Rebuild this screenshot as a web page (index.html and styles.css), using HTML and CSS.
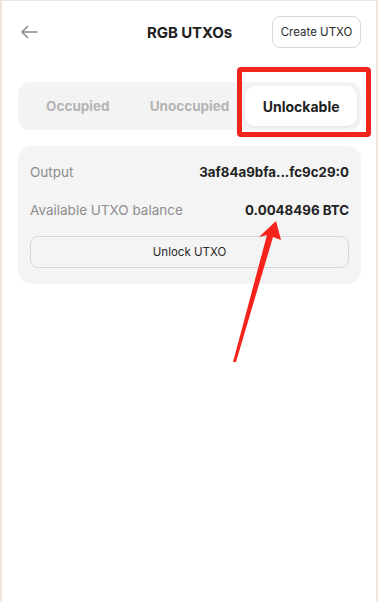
FILE: index.html
```html
<!DOCTYPE html>
<html>
<head>
<meta charset="utf-8">
<link rel="stylesheet" href="styles.css">
</head>
<body>
<div class="frame">
  <div class="edge-marks"><span></span><span></span></div>
  <header class="topbar">
    <button class="back" aria-label="Back">
      <svg width="18" height="14" viewBox="0 0 18 14"><path d="M17 7H2M7.5 1.5L2 7l5.5 5.5" fill="none" stroke="#8a8a8a" stroke-width="1.6" stroke-linecap="round" stroke-linejoin="round"/></svg>
    </button>
    <h1 class="title">RGB UTXOs</h1>
    <div class="right"><button class="create">Create UTXO</button></div>
  </header>

  <nav class="tabs">
    <div class="tab">Occupied</div>
    <div class="tab">Unoccupied</div>
    <div class="tab active">Unlockable</div>
  </nav>

  <section class="card">
    <div class="row"><span class="label">Output</span><span class="value">3af84a9bfa...fc9c29:0</span></div>
    <div class="row"><span class="label">Available UTXO balance</span><span class="value">0.0048496 BTC</span></div>
    <button class="unlock">Unlock UTXO</button>
  </section>

  <div class="highlight"></div>
  <svg class="arrow" width="378" height="601" viewBox="0 0 378 601">
    <polygon points="233,362 267,235 259,237 276,221 281,240 273,237 236,362" fill="#f5231b"/>
  </svg>
</div>
</body>
</html>
```
FILE: styles.css
```css
* { box-sizing: border-box; }
html, body { margin: 0; padding: 0; background: #fff; }
body { font-family: Inter, "Noto Sans", sans-serif; color: #1e1e1e; }
.frame {
  position: relative;
  width: 378px;
  height: 601px;
  border-left: 2px solid #efe4dc;
  border-right: 2px solid #efe4dc;
  border-top: 1px solid #efe4dc;
  background: #fff;
  padding: 15px 15px 0 16px;
  overflow: hidden;
}
.edge-marks { position: absolute; left: -2px; top: 140px; display: flex; flex-direction: column; gap: 6px; }
.edge-marks span { display: block; width: 2px; height: 14px; background: #3b5fb0; }
.topbar { display: grid; grid-template-columns: 1fr auto 1fr; align-items: center; height: 32px; }
.back { background: none; border: 0; padding: 0; margin-left: 2px; width: 18px; height: 14px; display: flex; }
.title { font-size: 15px; font-weight: 700; margin: 0; letter-spacing: -0.1px; }
.right { display: flex; justify-content: flex-end; }
.create {
  font-family: inherit; font-size: 11.5px; color: #2a2a2a; background: #fff;
  border: 1px solid #d9d9d9; border-radius: 8px; height: 32px; padding: 0 7px; width: 89px;
}
.tabs {
  margin-top: 34px; height: 48px; background: #f3f3f3; border-radius: 12px;
  display: grid; grid-template-columns: 1fr 1fr 1fr; padding: 4px; gap: 0; align-items: stretch;
}
.tab { display: flex; align-items: center; justify-content: center; font-weight: 700; font-size: 13.5px; color: #b3b3b3; border-radius: 10px; }
.active { background: #fff; color: #222; box-shadow: 0 1px 3px rgba(0,0,0,0.06); font-size: 14px; }
.card {
  margin-top: 16px; background: #f4f4f4; border-radius: 14px; padding: 14px 12px 16px 12px;
}
.row { display: flex; justify-content: space-between; align-items: center; height: 24px; margin-bottom: 14px; }
.label { font-size: 13.5px; color: #8d8d8d; }
.value { font-size: 13.3px; font-weight: 700; color: #222; }
.unlock {
  display: block; width: 100%; height: 32px; margin-top: 1px; background: #f4f4f4;
  border: 1px solid #d6d6d6; border-radius: 8px; font-family: inherit; font-size: 11.5px; color: #2a2a2a;
}
.highlight {
  position: absolute; left: 235px; top: 66px; width: 134px; height: 70px;
  border: 5px solid #f2241c; border-radius: 4px;
}
.arrow { position: absolute; left: -2px; top: -1px; pointer-events: none; }
```
